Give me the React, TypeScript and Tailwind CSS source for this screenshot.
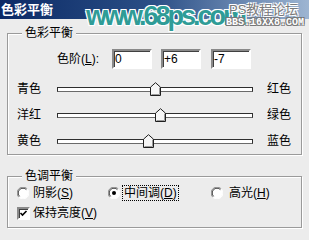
import React from "react";

const UI = "font-['Liberation_Sans','Noto_Sans_CJK_SC',sans-serif]";

function Group({ title, className, children }: { title: string; className: string; children: React.ReactNode }) {
  return (
    <div
      className={`relative border border-[#9a9a9a] shadow-[inset_1px_1px_0_#fff,1px_1px_0_#fff] ${className}`}
    >
      <span className="absolute left-[14px] top-[-8px] bg-[#ececec] px-[3px] text-[12px] leading-[14px]">
        {title}
      </span>
      {children}
    </div>
  );
}

function Box({ value, className }: { value: string; className?: string }) {
  return (
    <div
      className={`h-[20px] w-[40px] border-2 border-t-[#8a8a8a] border-l-[#8a8a8a] border-b-white border-r-white bg-white pl-[1px] text-[12px] leading-[16px] shadow-[inset_1px_1px_0_#404040] ${className ?? ""}`}
    >
      {value}
    </div>
  );
}

function Thumb() {
  return (
    <svg width="11" height="14" viewBox="0 0 11 14" className="block">
      <path d="M0.5 13.5V5.2L5.5 0.7L10.5 5.2V13.5Z" fill="#f6f6f6" stroke="#1e1e1e" />
      <path d="M9.5 5.6V12.5H1.5" fill="none" stroke="#9a9a9a" />
    </svg>
  );
}

function Slider({ left, right, value }: { left: string; right: string; value: number }) {
  // track spans 196px, range -100..100
  const pos = 98 + value * 0.98;
  return (
    <div className="flex h-[26px] items-center pl-[9px]">
      <span className="w-[40px] text-[12px] leading-[14px]">{left}</span>
      <div className="relative h-[5px] w-[196px] border border-[#2e2e2e] border-b-[#6a6a6a] bg-white">
        <div className="absolute top-1/2 -translate-y-1/2" style={{ left: pos - 6.5 }}>
          <Thumb />
        </div>
      </div>
      <span className="ml-[14px] text-[12px] leading-[14px]">{right}</span>
    </div>
  );
}

function Radio({ checked }: { checked?: boolean }) {
  return (
    <svg width="12" height="12" viewBox="0 0 12 12" className="block shrink-0">
      <circle cx="6" cy="6" r="5.5" fill="#fff" />
      <path d="M1.8 10.2A5.5 5.5 0 0 1 10.2 1.8" fill="none" stroke="#8a8a8a" />
      <path d="M2.6 9.4A4.5 4.5 0 0 1 9.4 2.6" fill="none" stroke="#3a3a3a" />
      <path d="M10.2 1.8A5.5 5.5 0 0 1 1.8 10.2" fill="none" stroke="#fff" />
      {checked && <circle cx="6" cy="6" r="2" fill="#000" />}
    </svg>
  );
}

function U({ c }: { c: string }) {
  return <span className="underline underline-offset-[1px]">{c}</span>;
}

export default function App() {
  return (
    <div className={`relative h-[240px] w-[309px] overflow-hidden bg-[#ececec] text-black ${UI}`}>
      <div className="flex h-[19px] items-center bg-linear-to-r from-[#0c2a66] via-[#2b4f86] to-[#9db5d2] pl-[1px] text-[13px] font-bold text-white">
        色彩平衡
      </div>

      <div className="px-[7px] pt-[14px]">
        <Group title="色彩平衡" className="h-[122px]">
          <div className="mt-[15px] flex items-center pl-[49px]">
            <span className="w-[55px] text-[12px] leading-[14px]">
              色阶(<U c="L" />):
            </span>
            <Box value="0" />
            <Box value="+6" className="ml-[9px]" />
            <Box value="-7" className="ml-[10px]" />
          </div>
          <div className="mt-[7px]">
            <Slider left="青色" right="红色" value={0} />
            <Slider left="洋红" right="绿色" value={6} />
            <Slider left="黄色" right="蓝色" value={-7} />
          </div>
        </Group>

        <Group title="色调平衡" className="mt-[21px] h-[52px]">
          <div className="pl-[9px] pt-[8px] text-[12px] leading-[14px]">
            <div className="flex h-[16px] items-center">
              <div className="flex w-[91px] items-center">
                <Radio />
                <span className="ml-[4px]">
                  阴影(<U c="S" />)
                </span>
              </div>
              <div className="flex w-[103px] items-center">
                <Radio checked />
                <span className="ml-[2px] border border-dotted border-black px-[1px]">
                  中间调(<U c="D" />)
                </span>
              </div>
              <div className="flex items-center">
                <Radio />
                <span className="ml-[6px]">
                  高光(<U c="H" />)
                </span>
              </div>
            </div>
            <div className="mt-[4px] flex h-[16px] items-center">
              <div className="relative h-[13px] w-[13px] border-2 border-t-[#8a8a8a] border-l-[#8a8a8a] border-b-white border-r-white bg-white shadow-[inset_1px_1px_0_#404040]">
                <svg width="9" height="9" viewBox="0 0 9 9" className="absolute left-0 top-0">
                  <path d="M1.5 4L3.5 6L7.5 2" fill="none" stroke="#000" strokeWidth="1.6" />
                </svg>
              </div>
              <span className="ml-[3px]">
                保持亮度(<U c="V" />)
              </span>
            </div>
          </div>
        </Group>
      </div>

      {/* watermark */}
      <div className="absolute left-[86px] top-[3px] font-['Liberation_Sans',sans-serif] text-[27px] font-bold leading-none tracking-[-3px] text-[#2f9c97] [text-shadow:1px_1px_0_#fff,-1px_-1px_0_#fff,1px_-1px_0_#fff,-1px_1px_0_#fff,0_1px_0_#fff,0_-1px_0_#fff]">
        www.68ps.com
      </div>
      <div className="absolute left-[229px] top-[3px] font-['Liberation_Sans','Noto_Sans_CJK_SC',sans-serif] text-[13px] leading-[14px] text-[#7a7a7a] [text-shadow:1px_1px_0_#fff,-1px_-1px_0_#fff,1px_-1px_0_#fff,-1px_1px_0_#fff]">
        PS教程论坛
      </div>
      <div className="absolute left-[226px] top-[17px] font-['Liberation_Mono',monospace] text-[10px] font-bold leading-[11px] text-white [text-shadow:1px_1px_0_#777,-1px_-1px_0_#777,1px_-1px_0_#777,-1px_1px_0_#777]">
        BBS.16XX8.COM
      </div>
    </div>
  );
}
